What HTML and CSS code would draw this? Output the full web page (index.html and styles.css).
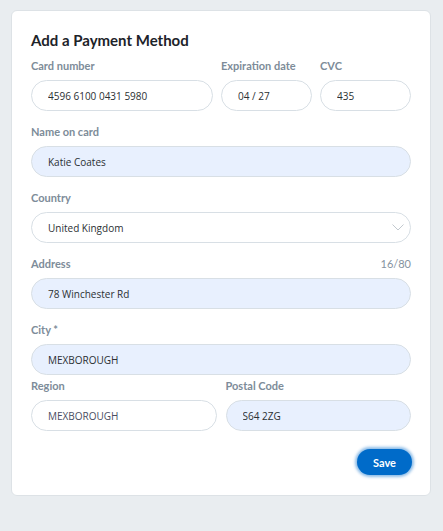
FILE: index.html
```html
<!DOCTYPE html>
<html lang="en">
<head>
    <meta charset="UTF-8">
    <meta name="viewport" content="width=device-width, initial-scale=1.0">
    <title>Add a Payment Method</title>
    <link rel="stylesheet" href="styles.css">
</head>
<body>
    <div class="card">
        <h1>Add a Payment Method</h1>

        <div class="row row-card">
            <div class="field">
                <label for="cardNumber">Card number</label>
                <input type="text" id="cardNumber" value="4596 6100 0431 5980">
            </div>
            <div class="field">
                <label for="expiry">Expiration date</label>
                <input type="text" id="expiry" value="04 / 27">
            </div>
            <div class="field">
                <label for="cvc">CVC</label>
                <input type="text" id="cvc" value="435">
            </div>
        </div>

        <div class="field">
            <label for="name">Name on card</label>
            <input type="text" id="name" class="filled" value="Katie Coates">
        </div>

        <div class="field">
            <label for="country">Country</label>
            <div class="select-wrap">
                <select id="country">
                    <option>United Kingdom</option>
                </select>
                <svg class="chevron" width="12" height="7" viewBox="0 0 12 7">
                    <path d="M0.5 0.5 L6 6 L11.5 0.5" fill="none" stroke="#c2c9cf" stroke-width="1"/>
                </svg>
            </div>
        </div>

        <div class="field">
            <div class="label-row">
                <label for="address">Address</label>
                <span class="counter">16/80</span>
            </div>
            <input type="text" id="address" class="filled" value="78 Winchester Rd">
        </div>

        <div class="field field-tight">
            <label for="city">City *</label>
            <input type="text" id="city" class="filled" value="MEXBOROUGH">
        </div>

        <div class="row row-half">
            <div class="field">
                <label for="region">Region</label>
                <input type="text" id="region" class="muted" value="MEXBOROUGH">
            </div>
            <div class="field">
                <label for="postal">Postal Code</label>
                <input type="text" id="postal" class="filled" value="S64 2ZG">
            </div>
        </div>

        <div class="actions">
            <button type="button" class="save-btn">Save</button>
        </div>
    </div>
</body>
</html>
```

FILE: styles.css
```css
* {
    box-sizing: border-box;
}
body {
    font-family: 'Open Sans', 'Noto Sans', sans-serif;
    background-color: #e9edf0;
    margin: 0;
    padding: 10px 12px 0 11px;
    color: #333;
}
.card {
    width: 420px;
    background: #fff;
    border: 1px solid #dde2e6;
    border-radius: 6px;
    padding: 19px 19px 20px;
}
h1 {
    margin: 0 0 9px;
    font-family: Lato, 'Open Sans', sans-serif;
    font-size: 15px;
    line-height: 20px;
    font-weight: 700;
    color: #1d2329;
}
.row {
    display: grid;
    gap: 8px;
}
.row-card {
    grid-template-columns: 182px 91px 91px;
    margin-bottom: 14px;
}
.row-half {
    grid-template-columns: 1fr 1fr;
    gap: 9px;
}
.field {
    margin-bottom: 14px;
}
.field-tight {
    margin-bottom: 4px;
}
.row .field {
    margin-bottom: 0;
}
label {
    display: block;
    font-family: Lato, 'Open Sans', sans-serif;
    font-size: 11px;
    line-height: 14px;
    font-weight: 700;
    color: #7d8c99;
    margin-bottom: 7px;
}
.label-row {
    display: flex;
    justify-content: space-between;
}
.counter {
    font-family: Lato, 'Open Sans', sans-serif;
    font-size: 11px;
    line-height: 14px;
    color: #8593a0;
}
input, select {
    display: block;
    width: 100%;
    height: 31px;
    padding: 0 16px;
    border: 1px solid #d8dfe5;
    border-radius: 16px;
    background: #fff;
    font-family: inherit;
    font-size: 10px;
    color: #2b2f33;
    outline: none;
}
input.filled {
    background: #e8f0fe;
}
input.muted {
    color: #4a4e63;
}
.select-wrap {
    position: relative;
}
select {
    appearance: none;
    -webkit-appearance: none;
}
.chevron {
    position: absolute;
    right: 7px;
    top: 12px;
}
.actions {
    display: flex;
    justify-content: flex-end;
    margin-top: 18px;
}
.save-btn {
    width: 55px;
    height: 26px;
    margin-right: -1px;
    border: none;
    border-radius: 13px;
    background: #006bc9;
    color: #fff;
    font-family: Lato, 'Open Sans', sans-serif;
    font-size: 11px;
    font-weight: 700;
    cursor: pointer;
    box-shadow: 0 0 3px 2px rgba(0, 107, 201, 0.45);
}
```
